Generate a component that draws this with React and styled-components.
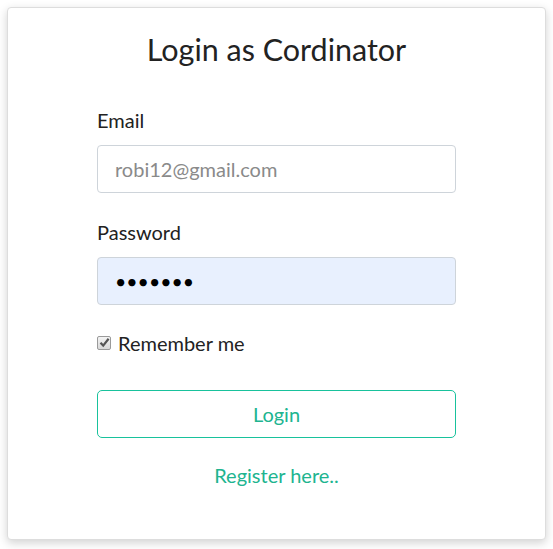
import styled, { createGlobalStyle } from "styled-components";

const GlobalStyle = createGlobalStyle`
  body {
    margin: 0;
    background: #fff;
    font-family: Lato, "Open Sans", sans-serif;
  }
`;

const App = () => {
  return (
    <>
      <GlobalStyle />
      <Page>
        <Card>
          <Title>Login as Cordinator</Title>
          <Form onSubmit={(e) => e.preventDefault()}>
            <Label htmlFor="email">Email</Label>
            <Input id="email" type="email" placeholder="robi12@gmail.com" />
            <Label htmlFor="password">Password</Label>
            <Input id="password" type="password" defaultValue="1234567" $filled />
            <CheckRow>
              <HiddenCheck type="checkbox" defaultChecked />
              <CheckBox>
                <svg width="11" height="11" viewBox="0 0 11 11">
                  <path d="M1.5 5.8 L4.2 8.6 L9.6 1.8" fill="none" stroke="#555" strokeWidth="2.2" />
                </svg>
              </CheckBox>
              Remember me
            </CheckRow>
            <LoginButton type="submit">Login</LoginButton>
            <RegisterLink href="#">Register here..</RegisterLink>
          </Form>
        </Card>
      </Page>
    </>
  );
};

export default App;

const Page = styled.div`
  padding: 7px 7px 9px 7px;
`;

const Card = styled.div`
  background: #fff;
  border: 1px solid #ddd;
  border-radius: 4px;
  box-shadow: 0 3px 10px rgba(0, 0, 0, 0.18);
  padding: 21px 89px 51px;
  display: flex;
  flex-direction: column;
  align-items: center;
`;

const Title = styled.h2`
  margin: 0;
  font-size: 30.5px;
  font-weight: 400;
  color: #222;
  line-height: 40px;
`;

const Form = styled.form`
  width: 100%;
  margin-top: 39px;
  display: flex;
  flex-direction: column;
`;

const Label = styled.label`
  font-size: 20px;
  color: #222;
  line-height: 25px;
  margin-bottom: 12px;
`;

const Input = styled.input`
  box-sizing: border-box;
  height: 48px;
  width: 100%;
  border: 1px solid #ced4da;
  border-radius: 4px;
  padding: 0 17px;
  font-family: Lato, sans-serif;
  font-size: 20px;
  color: #495057;
  background: ${(p) => (p.$filled ? "#e8f0fe" : "#fff")};
  margin-bottom: 27px;
  outline: none;
  &::placeholder {
    color: #8a8a8a;
  }
  &[type="password"] {
    font-size: 19.5px;
    letter-spacing: 0;
    color: #000;
  }
`;

const CheckRow = styled.label`
  display: flex;
  align-items: center;
  gap: 7px;
  font-size: 20px;
  color: #222;
  line-height: 25px;
  margin-top: -1px;
`;

const HiddenCheck = styled.input`
  display: none;
`;

const CheckBox = styled.span`
  box-sizing: border-box;
  width: 14px;
  height: 14px;
  border: 1px solid #9a9a9a;
  border-radius: 2px;
  background: linear-gradient(#f4f4f4, #d8d8d8);
  display: flex;
  align-items: center;
  justify-content: center;
  margin-top: -2px;
`;

const LoginButton = styled.button`
  margin-top: 34px;
  height: 48px;
  width: 100%;
  background: #fff;
  border: 1px solid #18c29c;
  border-radius: 5px;
  color: #20b48f;
  font-family: Lato, sans-serif;
  font-size: 20px;
  cursor: pointer;
`;

const RegisterLink = styled.a`
  margin-top: 25px;
  align-self: center;
  font-size: 20px;
  line-height: 25px;
  color: #20b48f;
  text-decoration: none;
`;
